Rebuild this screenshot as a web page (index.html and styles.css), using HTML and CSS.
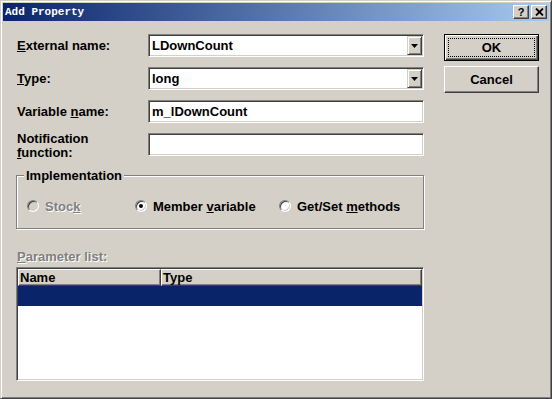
FILE: index.html
```html
<!DOCTYPE html>
<html lang="en">
<head>
    <meta charset="UTF-8">
    <meta name="viewport" content="width=device-width, initial-scale=1.0">
    <title>Add Property</title>
    <link rel="stylesheet" href="styles.css">
</head>
<body>
    <div class="window">
        <div class="titlebar">
            <span class="title">Add Property</span>
            <div class="caption-buttons">
                <span class="caption-btn help">?</span>
                <span class="caption-btn close">
                    <svg width="9" height="8" viewBox="0 0 9 8"><path d="M1 0.5 L8 7.5 M8 0.5 L1 7.5" stroke="#000" stroke-width="1.8"/></svg>
                </span>
            </div>
        </div>
        <div class="content">
            <div class="main">
                <div class="row">
                    <label><u>E</u>xternal name:</label>
                    <div class="field combo">
                        <span class="value">LDownCount</span>
                        <span class="drop"><svg width="7" height="4" viewBox="0 0 7 4"><polygon points="0,0 7,0 3.5,4" fill="#000"/></svg></span>
                    </div>
                </div>
                <div class="row">
                    <label><u>T</u>ype:</label>
                    <div class="field combo">
                        <span class="value">long</span>
                        <span class="drop"><svg width="7" height="4" viewBox="0 0 7 4"><polygon points="0,0 7,0 3.5,4" fill="#000"/></svg></span>
                    </div>
                </div>
                <div class="row">
                    <label>Variable <u>n</u>ame:</label>
                    <div class="field"><span class="value">m_lDownCount</span></div>
                </div>
                <div class="row last">
                    <label class="two-line">Notification<br><u>f</u>unction:</label>
                    <div class="field"><span class="value"></span></div>
                </div>

                <div class="group">
                    <div class="group-title">Implementation</div>
                    <div class="radios">
                        <div class="option opt-stock disabled"><span class="radio"></span><span>Stoc<u>k</u></span></div>
                        <div class="option opt-member"><span class="radio checked"></span><span>Member <u>v</u>ariable</span></div>
                        <div class="option"><span class="radio"></span><span>Get/Set <u>m</u>ethods</span></div>
                    </div>
                </div>

                <div class="list-label"><u>P</u>arameter list:</div>
                <div class="list">
                    <div class="list-header">
                        <div class="col col-name">Name</div>
                        <div class="col col-type">Type</div>
                    </div>
                    <div class="list-row selected"></div>
                </div>
            </div>
            <div class="side">
                <button class="btn default">OK</button>
                <button class="btn">Cancel</button>
            </div>
        </div>
    </div>
</body>
</html>
```

FILE: styles.css
```css
body {
    margin: 0;
    background-color: #d4d0c8;
    font-family: "Liberation Sans", Arial, sans-serif;
    font-size: 13px;
    font-weight: bold;
    color: #000;
}
u {
    text-decoration: underline;
    text-underline-offset: 1px;
}
.window {
    width: 552px;
    height: 399px;
    box-sizing: border-box;
    background-color: #d4d0c8;
    border: 1px solid;
    border-color: #d4d0c8 #404040 #404040 #d4d0c8;
    box-shadow: inset 1px 1px #fff, inset -1px -1px #808080;
    padding: 2px;
}
.titlebar {
    height: 18px;
    display: flex;
    align-items: center;
    justify-content: space-between;
    background: linear-gradient(to right, #0a246a, #a6caf0);
    padding: 0 2px;
}
.title {
    font-family: "Liberation Mono", monospace;
    font-size: 11px;
    font-weight: bold;
    color: #fff;
}
.caption-buttons {
    display: flex;
    gap: 2px;
}
.caption-btn {
    width: 16px;
    height: 14px;
    box-sizing: border-box;
    display: flex;
    align-items: center;
    justify-content: center;
    background-color: #d4d0c8;
    border: 1px solid;
    border-color: #fff #404040 #404040 #fff;
    box-shadow: inset -1px -1px #808080;
    font-size: 11px;
    line-height: 11px;
}
.content {
    display: flex;
    padding: 13px 0 0 13px;
}
.main {
    width: 408px;
}
.side {
    margin-left: 20px;
    width: 95px;
    display: flex;
    flex-direction: column;
    gap: 5px;
}
.row {
    display: flex;
    align-items: center;
    height: 23px;
    margin-bottom: 10px;
}
.row.last {
    margin-bottom: 0;
}
.row label {
    width: 131px;
    padding-left: 1px;
}
.two-line {
    line-height: 14px;
    margin-top: 2px;
}
.field {
    width: 276px;
    height: 23px;
    box-sizing: border-box;
    display: flex;
    align-items: center;
    background-color: #fff;
    border: 1px solid;
    border-color: #808080 #fff #fff #808080;
    box-shadow: inset 1px 1px #404040, inset -1px -1px #d4d0c8;
}
.value {
    flex: 1;
    padding-left: 3px;
}
.drop {
    align-self: stretch;
    width: 15px;
    margin: 1px;
    box-sizing: border-box;
    display: flex;
    align-items: center;
    justify-content: center;
    background-color: #d4d0c8;
    border: 1px solid;
    border-color: #d4d0c8 #404040 #404040 #d4d0c8;
    box-shadow: inset 1px 1px #fff, inset -1px -1px #808080;
}
.group {
    margin-top: 19px;
    height: 54px;
    box-sizing: border-box;
    border: 1px solid #808080;
    box-shadow: inset 1px 1px #fff, 1px 1px #fff;
}
.group-title {
    width: fit-content;
    margin: -8px 0 0 7px;
    padding: 0 2px;
    line-height: 15px;
    background-color: #d4d0c8;
}
.radios {
    display: flex;
    align-items: center;
    height: 16px;
    margin-top: 15px;
    padding-left: 10px;
}
.option {
    display: flex;
    align-items: center;
    gap: 6px;
}
.opt-stock {
    width: 108px;
}
.opt-member {
    width: 144px;
}
.option.disabled {
    color: #808080;
    text-shadow: 1px 1px #fff;
}
.radio {
    width: 12px;
    height: 12px;
    box-sizing: border-box;
    border-radius: 50%;
    border: 1px solid;
    border-color: #808080 #fff #fff #808080;
    box-shadow: inset 1px 1px #404040, inset -1px -1px #d4d0c8;
    background-color: #fff;
    display: flex;
    align-items: center;
    justify-content: center;
}
.disabled .radio {
    background-color: #d4d0c8;
}
.radio.checked::after {
    content: "";
    width: 4px;
    height: 4px;
    border-radius: 50%;
    background-color: #000;
}
.list-label {
    margin-top: 20px;
    padding-left: 1px;
    line-height: 15px;
    color: #808080;
    text-shadow: 1px 1px #fff;
}
.list {
    margin-top: 3px;
    height: 114px;
    box-sizing: border-box;
    padding: 1px;
    background-color: #fff;
    border: 1px solid;
    border-color: #808080 #fff #fff #808080;
    box-shadow: inset 1px 1px #404040, inset -1px -1px #d4d0c8;
}
.list-header {
    display: flex;
    height: 17px;
}
.col {
    box-sizing: border-box;
    padding-left: 1px;
    line-height: 15px;
    background-color: #d4d0c8;
    border: 1px solid;
    border-color: #fff #404040 #404040 #fff;
    box-shadow: inset -1px -1px #808080;
}
.col-name {
    width: 143px;
}
.col-type {
    flex: 1;
}
.list-row {
    height: 20px;
}
.list-row.selected {
    background-color: #0a246a;
}
.btn {
    width: 95px;
    height: 27px;
    box-sizing: border-box;
    font-family: "Liberation Sans", Arial, sans-serif;
    font-size: 13px;
    font-weight: bold;
    color: #000;
    background-color: #d4d0c8;
    border: 1px solid;
    border-color: #fff #404040 #404040 #fff;
    box-shadow: inset -1px -1px #808080;
    padding: 0;
}
.btn.default {
    border-color: #000;
    box-shadow: inset 1px 1px #fff, inset -1px -1px #404040, inset -2px -2px #808080;
    outline: 1px dotted #000;
    outline-offset: -5px;
}
```
